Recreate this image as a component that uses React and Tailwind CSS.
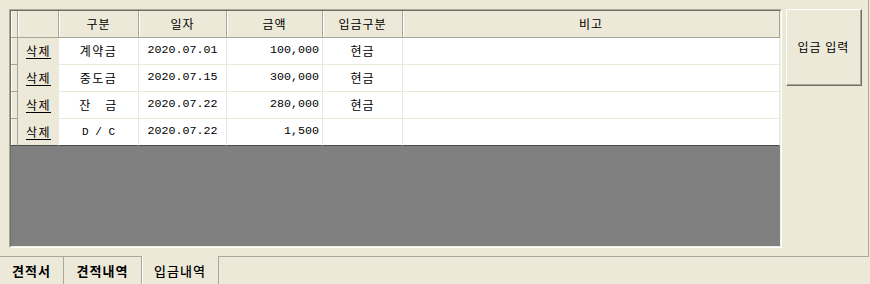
import React from "react";

const KR = "font-['Noto_Sans_CJK_KR',sans-serif]";
const MONO = "font-['Liberation_Mono','Noto_Sans_CJK_KR',monospace]";

const cols = [
  { w: "w-[41px]", key: "del" },
  { w: "w-[80px]", key: "type", label: "구분" },
  { w: "w-[88px]", key: "date", label: "일자" },
  { w: "w-[96px]", key: "amt", label: "금액" },
  { w: "w-[80px]", key: "pay", label: "입금구분" },
  { w: "w-[377px]", key: "note", label: "비고" },
];

const rows = [
  { type: "계약금", date: "2020.07.01", amt: "100,000", pay: "현금" },
  { type: "중도금", date: "2020.07.15", amt: "300,000", pay: "현금" },
  { type: "잔\u3000금", date: "2020.07.22", amt: "280,000", pay: "현금" },
  { type: "D / C", date: "2020.07.22", amt: "1,500", pay: "", mono: true },
];

function HeaderRow() {
  return (
    <div className="flex h-[27px]">
      <div className="w-[7px] h-full bg-[#ECE9D8] border-r border-b border-[#a7a597] shadow-[inset_1px_0_0_#ffffff]" />
      {cols.map((c) => (
        <div
          key={c.key}
          className={`${c.w} h-full bg-[#ECE9D8] border-r border-b border-[#a7a597] shadow-[inset_1px_0_0_#ffffff] flex items-center justify-center ${KR} text-[12px] tracking-[1px] text-black leading-none`}
        >
          {c.label || ""}
        </div>
      ))}
    </div>
  );
}

function DataRow({ r, last }) {
  const bb = last ? "border-b-[#4a4a4a]" : "border-b-[#ebe9dc]";
  return (
    <div className="flex h-[27px]">
      <div
        className={`w-[7px] h-full bg-[#ECE9D8] border-r border-b border-r-[#a7a597] ${last ? "border-b-[#4a4a4a]" : "border-b-[#a7a597]"} shadow-[inset_1px_0_0_#ffffff]`}
      />
      <div
        className={`w-[41px] h-full bg-[#ECE9D8] border-r border-b border-r-[#ebe9dc] ${bb} flex items-center justify-center ${KR} text-[12px] tracking-[1.5px] text-black leading-none`}
      >
        <span className="underline underline-offset-[2px] pl-[1px]">삭제</span>
      </div>
      <div
        className={`w-[80px] h-full bg-white border-r border-b border-r-[#ebe9dc] ${bb} flex items-center justify-center text-black leading-none ${
          r.mono ? `${MONO} text-[11px]` : `${KR} text-[12px] tracking-[1.5px]`
        } whitespace-pre`}
      >
        {r.type}
      </div>
      <div
        className={`w-[88px] h-full bg-white border-r border-b border-r-[#ebe9dc] ${bb} flex items-center justify-center ${MONO} text-[11.67px] text-black leading-none`}
      >
        {r.date}
      </div>
      <div
        className={`w-[96px] h-full bg-white border-r border-b border-r-[#ebe9dc] ${bb} flex items-center justify-end pr-[3px] ${MONO} text-[11.67px] text-black leading-none`}
      >
        {r.amt}
      </div>
      <div
        className={`w-[80px] h-full bg-white border-r border-b border-r-[#ebe9dc] ${bb} flex items-center justify-center ${KR} text-[12px] tracking-[1px] text-black leading-none`}
      >
        {r.pay}
      </div>
      <div className={`w-[377px] h-full bg-white border-r border-b border-r-[#ebe9dc] ${bb}`} />
    </div>
  );
}

export default function App() {
  return (
    <div className="w-[870px] h-[284px] bg-[#ECE9D8] flex flex-col overflow-hidden">
      {/* tab page */}
      <div className="w-[869px] h-[257px] border-r border-b border-[#aca899] flex items-start pt-[9px] pl-[9px]">
        {/* grid with sunken border */}
        <div className="w-[773px] h-[239px] border-t border-l border-t-[#aca899] border-l-[#aca899] border-b border-r border-b-white border-r-white">
          <div className="w-full h-full border-t border-l border-t-[#716f64] border-l-[#716f64] border-b border-r border-b-[#f1efe2] border-r-[#f1efe2] flex flex-col">
            <HeaderRow />
            {rows.map((r, i) => (
              <DataRow key={i} r={r} last={i === rows.length - 1} />
            ))}
            <div className="flex-1 bg-[#808080]" />
          </div>
        </div>
        {/* button */}
        <div className="ml-[4px] w-[76px] h-[77px] border-t border-l border-t-white border-l-white border-b border-r border-b-[#716f64] border-r-[#716f64]">
          <div className="w-full h-full border-b border-r border-b-[#aca899] border-r-[#aca899] bg-[#ECE9D8] flex items-center justify-center">
            <span className={`${KR} text-[12px] tracking-[1px] text-black leading-none`}>입금 입력</span>
          </div>
        </div>
      </div>
      {/* tabs */}
      <div className="flex h-[27px]">
        <div className={`w-[64px] h-full border-r border-[#aca899] flex items-center justify-center ${KR} text-[13px] tracking-[1px] font-bold text-black leading-none`}>
          견적서
        </div>
        <div className={`w-[78px] h-full border-r border-[#aca899] flex items-center justify-center ${KR} text-[13px] tracking-[1px] font-bold text-black leading-none`}>
          견적내역
        </div>
        <div className={`relative -mt-[1px] w-[77px] h-[28px] bg-[#ECE9D8] border-r border-[#aca899] shadow-[inset_1px_0_0_#ffffff] flex items-center justify-center pt-[1px] ${KR} text-[13px] tracking-[1px] font-medium text-black leading-none`}>
          입금내역
        </div>
      </div>
    </div>
  );
}
